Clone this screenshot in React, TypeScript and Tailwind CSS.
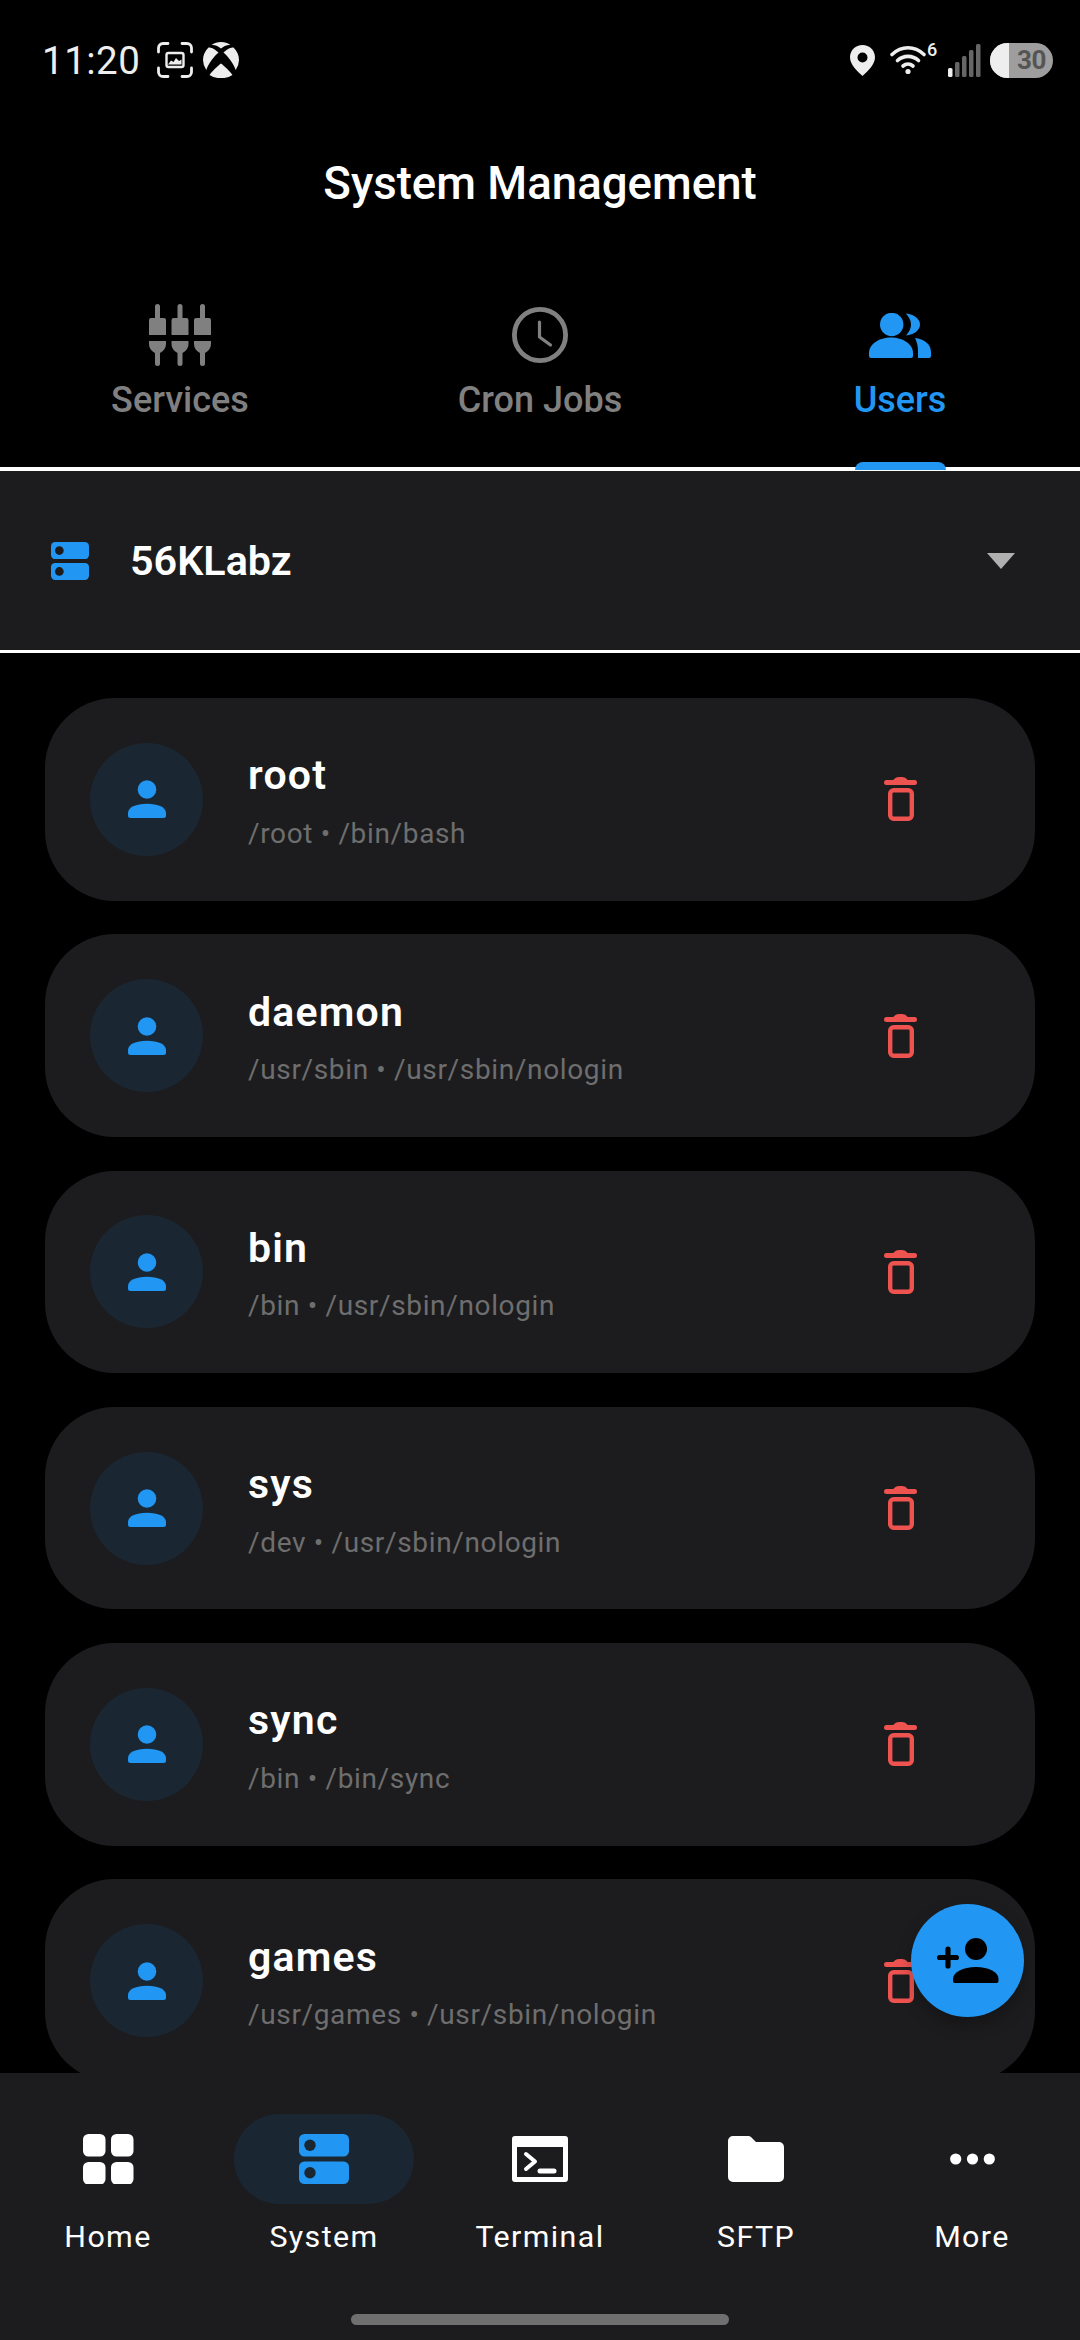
import React from "react";

const BLUE = "#2196f3";

function ServicesIcon() {
  const col = (x: number) => (
    <g key={x} transform={`translate(${x} 0)`}>
      <path d="M6 2.500a2.500 2.500 0 0 1 5 0V14h4a2 2 0 0 1 2 2v15H0V16a2 2 0 0 1 2-2h4z" />
      <path d="M0 37h17v3c0 4-2.200 7-6 9v10.500a2.500 2.500 0 0 1-5 0V49c-3.800-2-6-5-6-9z" />
    </g>
  );
  return (
    <svg width="62" height="62" viewBox="0 0 62 62" fill="#808080" className="block">
      {[0, 22.5, 45].map(col)}
    </svg>
  );
}

function ClockIcon() {
  return (
    <svg width="58" height="58" viewBox="0 0 58 58" fill="none" stroke="#808080" strokeWidth="4.8" className="block">
      <circle cx="29" cy="29" r="25.600" />
      <path d="M28.500 16v15l11 8" strokeWidth="3.200" strokeLinecap="round" strokeLinejoin="round" />
    </svg>
  );
}

function UsersIcon() {
  return (
    <svg width="62" height="45" viewBox="0 0 62 45" fill={BLUE} className="block">
      <circle cx="22.700" cy="11.500" r="11.700" />
      <path d="M0 40c0-9 10-15.500 22-15.500S44 31 44 40v3a2 2 0 0 1-2 2H2a2 2 0 0 1-2-2z" />
      <path d="M37 .5C45 1.500 51 5.500 51 11.500S45 21.500 37 22.500C40 19 42 15.500 42 11.500S40 4 37 .5z" />
      <path d="M46 25c9 1 16 6 16 14v4a2 2 0 0 1-2 2H49v-6c0-6-1-10-3-14z" />
    </svg>
  );
}

function ServerIcon({ w, h, dot, color }: { w: number; h: number; dot: string; color: string }) {
  return (
    <svg width={w} height={h} viewBox="0 0 50 50" className="block">
      <rect x="0" y="0" width="50" height="22.500" rx="5.500" fill={color} />
      <rect x="0" y="27.500" width="50" height="22.500" rx="5.500" fill={color} />
      <circle cx="11" cy="11.250" r="5.700" fill={dot} />
      <circle cx="11" cy="38.750" r="5.700" fill={dot} />
    </svg>
  );
}

function PersonIcon() {
  return (
    <svg width="38" height="38" viewBox="0 0 38 38" fill={BLUE} className="block">
      <circle cx="19" cy="9.500" r="9.300" />
      <path d="M0 33c0-5.500 8-9.200 19-9.200S38 27.500 38 33v2.500A2.500 2.500 0 0 1 35.500 38h-33A2.500 2.500 0 0 1 0 35.500z" />
    </svg>
  );
}

function TrashIcon() {
  return (
    <svg width="33" height="44" viewBox="0 0 33 44" fill="none" className="block">
      <rect x="6.200" y="13.200" width="21.600" height="28.600" rx="3.500" stroke="#ef5350" strokeWidth="4.400" />
      <path d="M2.500 5.500h28" stroke="#ef5350" strokeWidth="5" strokeLinecap="round" />
      <path d="M9 4c1-2.500 3-4 7.500-4s6.500 1.500 7.500 4z" fill="#ef5350" />
    </svg>
  );
}

function AddPersonIcon() {
  return (
    <svg width="62" height="45" viewBox="0 0 62 45" fill="#000" className="block">
      <circle cx="39" cy="11" r="11" />
      <path d="M16 41c0-7 10-12 23-12s22.500 5 22.500 12v2a2 2 0 0 1-2 2H18a2 2 0 0 1-2-2z" />
      <path d="M2.600 19.500h16.800M11 11v17" stroke="#000" strokeWidth="5.200" strokeLinecap="round" fill="none" />
    </svg>
  );
}

function ScreenshotIcon() {
  return (
    <svg width="36" height="36" viewBox="0 0 36 36" fill="none" className="block">
      <path
        d="M1.500 10V6a4.500 4.500 0 0 1 4.500-4.500h5M25 1.500h5A4.500 4.500 0 0 1 34.500 6v4M34.500 26v4a4.500 4.500 0 0 1-4.500 4.500h-5M11 34.500H6A4.500 4.500 0 0 1 1.500 30v-4"
        stroke="#eee"
        strokeWidth="2.800"
        strokeLinecap="round"
      />
      <rect x="9.500" y="11" width="17" height="14" rx="2" stroke="#eee" strokeWidth="2.400" />
      <path d="M11 22.500l3-4 2.500 1.500 2.500-4 3 3 2.500-1.500v5z" fill="#eee" />
    </svg>
  );
}

function XboxIcon() {
  return (
    <svg width="36" height="36" viewBox="0 0 36 36" fill="#eee" className="block">
      <path d="M18 21.500c3.500 2.600 9.500 8.500 11.500 11.500A17.500 17.500 0 0 1 18 36 17.500 17.500 0 0 1 6.500 33c2-3 8-8.900 11.500-11.500z" />
      <path d="M8.500 3C11 1 14.500 0 18 0s7 1 9.500 3C24 2.500 20.500 4.500 18 6.500 15.500 4.500 12 2.500 8.500 3z" />
      <path d="M5.500 5.500c3-.8 7.500 2.600 10 5C11.500 14 5 22 3.300 28A17.500 17.500 0 0 1 0 18C0 13 2 9 5.500 5.500z" />
      <path d="M30.500 5.500c-3-.8-7.500 2.600-10 5 4 3.500 10.500 11.500 12.200 17.500A17.500 17.500 0 0 0 36 18c0-5-2-9-5.500-12.500z" />
    </svg>
  );
}

function LocationIcon() {
  return (
    <svg width="25" height="31" viewBox="0 0 25 31" className="block">
      <path fillRule="evenodd" fill="#eee" d="M12.500 0C5.600 0 0 5.400 0 12.200 0 19.500 7 26 12.500 31 18 26 25 19.500 25 12.200 25 5.400 19.400 0 12.500 0zm0 7.500a5 5 0 1 1 0 10 5 5 0 0 1 0-10z" />
    </svg>
  );
}

function WifiIcon() {
  return (
    <svg width="36" height="30" viewBox="0 0 36 30" fill="none" stroke="#eee" strokeWidth="3.600" strokeLinecap="round" className="block">
      <path d="M2 9.500C11.500 .5 24.500 .5 34 9.500" />
      <path d="M7.500 15.500c6-5.500 15-5.500 21 0" />
      <path d="M13 21c3-2.500 7-2.500 10 0" />
      <circle cx="18" cy="26.500" r="2.600" fill="#eee" stroke="none" />
    </svg>
  );
}

function SignalIcon() {
  const bars = [
    { x: 0, h: 9, c: "#eee" },
    { x: 7, h: 15, c: "#666" },
    { x: 14, h: 21, c: "#666" },
    { x: 21, h: 27, c: "#666" },
    { x: 28, h: 33, c: "#666" },
  ];
  return (
    <svg width="33" height="33" viewBox="0 0 33 33" className="block">
      {bars.map((b) => (
        <rect key={b.x} x={b.x} y={33 - b.h} width="4.500" height={b.h} rx="1.500" fill={b.c} />
      ))}
    </svg>
  );
}

function NavHome() {
  return (
    <svg width="51" height="50" viewBox="0 0 51 50" fill="#fff" className="block">
      <rect x="0" y="0" width="22.500" height="22.500" rx="5.500" />
      <rect x="28" y="0" width="22.500" height="22.500" rx="5.500" />
      <rect x="0" y="28" width="22.500" height="22.500" rx="5.500" />
      <rect x="28" y="28" width="22.500" height="22.500" rx="5.500" />
    </svg>
  );
}

function NavTerminal() {
  return (
    <svg width="56" height="46" viewBox="0 0 56 46" className="block">
      <path fillRule="evenodd" fill="#fff" d="M3 0h50a3 3 0 0 1 3 3v40a3 3 0 0 1-3 3H3a3 3 0 0 1-3-3V3a3 3 0 0 1 3-3zm2 11v30h46V11z" />
      <path d="M14 18l9 7.500-9 7.500" fill="none" stroke="#fff" strokeWidth="4" strokeLinecap="round" strokeLinejoin="round" />
      <path d="M28 35h14" fill="none" stroke="#fff" strokeWidth="5" strokeLinecap="round" />
    </svg>
  );
}

function NavFolder() {
  return (
    <svg width="56" height="46" viewBox="0 0 56 46" fill="#fff" className="block">
      <path d="M5 0h15c1.500 0 2.500.5 3.500 1.500L28 6h23a5 5 0 0 1 5 5v30a5 5 0 0 1-5 5H5a5 5 0 0 1-5-5V5a5 5 0 0 1 5-5z" />
    </svg>
  );
}

function NavMore() {
  return (
    <svg width="45" height="12" viewBox="0 0 45 12" fill="#fff" className="block">
      <circle cx="5.700" cy="6" r="5.600" />
      <circle cx="22.500" cy="6" r="5.600" />
      <circle cx="39.300" cy="6" r="5.600" />
    </svg>
  );
}

const users = [
  { name: "root", sub: "/root • /bin/bash" },
  { name: "daemon", sub: "/usr/sbin • /usr/sbin/nologin" },
  { name: "bin", sub: "/bin • /usr/sbin/nologin" },
  { name: "sys", sub: "/dev • /usr/sbin/nologin" },
  { name: "sync", sub: "/bin • /bin/sync" },
  { name: "games", sub: "/usr/games • /usr/sbin/nologin" },
];

function Tab({ icon, label, active }: { icon: React.ReactNode; label: string; active?: boolean }) {
  return (
    <div className="relative flex-1 flex flex-col items-center">
      <div className="h-[62px] mt-[58px] flex items-center justify-center">{icon}</div>
      <div className={`mt-[12px] text-[36px] leading-[44px] font-medium ${active ? "text-[#2196f3]" : "text-[#808080]"}`}>{label}</div>
      {active && <div className="absolute bottom-[-3px] left-[135px] w-[91px] h-[8px] rounded-t-[8px] bg-[#2196f3]" />}
    </div>
  );
}

function NavItem({ icon, label, active }: { icon: React.ReactNode; label: string; active?: boolean }) {
  return (
    <div className="flex-1 flex flex-col items-center">
      <div className={`w-[180px] h-[90px] rounded-[45px] flex items-center justify-center ${active ? "bg-[#1a2733]" : ""}`}>{icon}</div>
      <div className="mt-[12.5px] text-[30.4px] leading-[40px] tracking-[1.4px] font-normal text-white">{label}</div>
    </div>
  );
}

export default function App() {
  return (
    <div className="relative w-[1080px] h-[2340px] overflow-hidden bg-black flex flex-col font-['Roboto',sans-serif] text-white">
      {/* status bar */}
      <div className="h-[120px] shrink-0 flex items-center justify-between pl-[42px] pr-[27px]">
        <div className="flex items-center">
          <span className="text-[38.5px] leading-[44px] mt-[1px] tracking-[0.5px] text-[#eee]">11:20</span>
          <div className="ml-[17px]"><ScreenshotIcon /></div>
          <div className="ml-[10px]"><XboxIcon /></div>
        </div>
        <div className="flex items-center">
          <LocationIcon />
          <div className="ml-[15px]"><WifiIcon /></div>
          <span className="self-start text-[18px] leading-[18px] font-medium text-[#eee] w-[22px] pl-[1px] mt-[-2px]">6</span>
          <SignalIcon />
          <div className="relative ml-[9px] w-[63px] h-[35px] rounded-[18px] overflow-hidden bg-[#9e9e9e] flex items-center justify-center">
            <div className="absolute left-0 top-0 bottom-0 w-[19px] bg-[#eee]" />
            <span className="relative text-[26px] leading-[26px] font-bold text-[#555] pl-[20px] tracking-[-0.3px]">30</span>
          </div>
        </div>
      </div>

      {/* title */}
      <div className="h-[126px] pt-[1px] shrink-0 flex items-center justify-center text-[45.6px] leading-[52px] font-medium">System Management</div>

      {/* tabs */}
      <div className="h-[221px] shrink-0 flex px-0">
        <Tab icon={<ServicesIcon />} label="Services" />
        <Tab icon={<ClockIcon />} label="Cron Jobs" />
        <Tab icon={<UsersIcon />} label="Users" active />
      </div>

      {/* server selector */}
      <div className="h-[186px] shrink-0 bg-[#1c1c1e] border-t-[4px] border-b-[3px] border-white flex items-center pl-[51px] pr-[65px]">
        <ServerIcon w={38} h={38} dot="#1c1c1e" color={BLUE} />
        <span className="ml-[41px] text-[41.3px] leading-[48px] font-semibold flex-1">56KLabz</span>
        <div className="w-0 h-0 border-l-[14.5px] border-r-[14.5px] border-t-[16px] border-l-transparent border-r-transparent border-t-[#b0b0b0]" />
      </div>

      {/* users */}
      <div className="flex-1 min-h-0 overflow-hidden px-[45px] pt-[45px] flex flex-col gap-[33.75px]">
        {users.map((u) => (
          <div key={u.name} className="h-[202.5px] shrink-0 rounded-[70px] bg-[#1c1c1e] flex items-center pl-[45px] pr-[118px]">
            <div className="w-[113px] h-[113px] rounded-full bg-[#1a2733] flex items-center justify-center shrink-0">
              <PersonIcon />
            </div>
            <div className="ml-[45px] flex-1 min-w-0 pt-[3.5px]">
              <div className="text-[41px] leading-[50px] font-semibold tracking-[1.2px] text-white">{u.name}</div>
              <div className="mt-[15.5px] text-[28px] leading-[36px] tracking-[0.65px] text-[#6e6e6e]">{u.sub}</div>
            </div>
            <TrashIcon />
          </div>
        ))}
      </div>

      {/* bottom nav */}
      <div className="relative h-[267px] shrink-0 bg-[#1c1c1e] pt-[41px] flex">
        <NavItem icon={<NavHome />} label="Home" />
        <NavItem icon={<ServerIcon w={50} h={50} dot="#1a2733" color={BLUE} />} label="System" active />
        <NavItem icon={<NavTerminal />} label="Terminal" />
        <NavItem icon={<NavFolder />} label="SFTP" />
        <NavItem icon={<NavMore />} label="More" />
        <div className="absolute left-[351px] top-[241px] w-[378px] h-[11px] rounded-full bg-[#6f6f6f]" />
      </div>

      {/* FAB */}
      <div className="absolute left-[911px] top-[1904px] w-[113px] h-[113px] rounded-full bg-[#2196f3] shadow-[0_8px_16px_rgba(0,0,0,0.25)] flex items-center justify-center">
        <AddPersonIcon />
      </div>
    </div>
  );
}
